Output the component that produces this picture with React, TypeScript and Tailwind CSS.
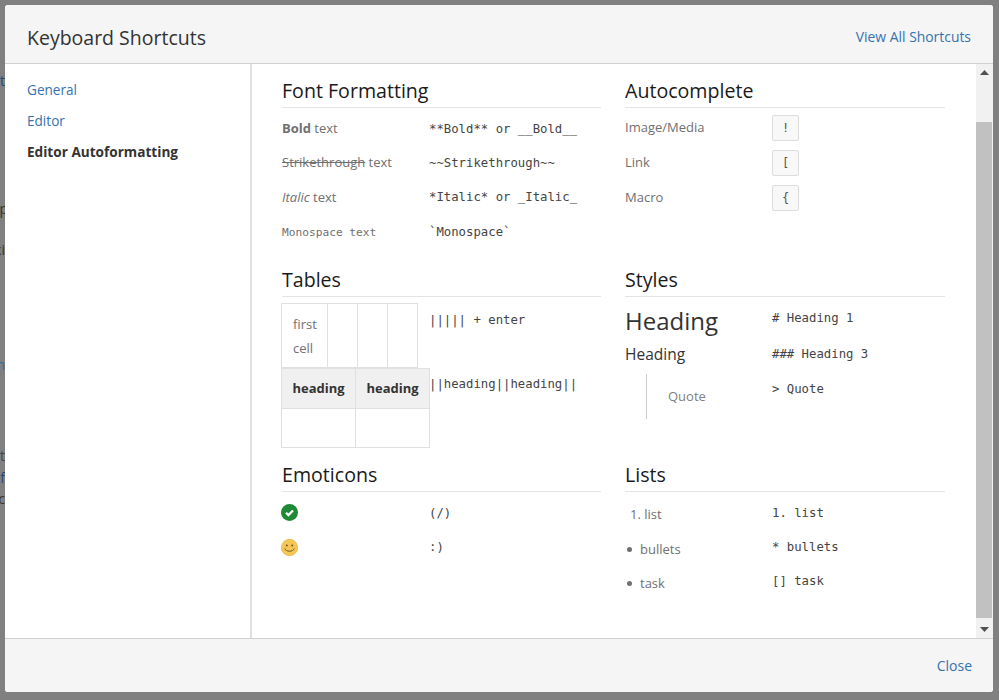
const SANS = 'font-["Open_Sans","Noto_Sans",sans-serif]';

// bits of the page behind the dialog that show in the strip on the left
const BEHIND = [
  { top: 'top-[72px]', color: 'text-[#1f4a7a]', text: 't' },
  { top: 'top-[200px]', color: 'text-[#333]', text: 'up' },
  { top: 'top-[241px]', color: 'text-[#333]', text: 'ki' },
  { top: 'top-[356px]', color: 'text-[#2f6f9f]', text: 'n' },
  { top: 'top-[447px]', color: 'text-[#444]', text: 'ct' },
  { top: 'top-[469px]', color: 'text-[#1f4a7a]', text: 'lf' },
  { top: 'top-[490px]', color: 'text-[#333]', text: 'c' },
];

const Section = ({ title, children }: { title: string; children: React.ReactNode }) => (
  <section>
    <h2 className="h-[30px] border-b border-[#e4e4e4] text-[19.6px] leading-[26px] text-[#1a1a1a]">{title}</h2>
    {children}
  </section>
);

const Mono = ({ children }: { children: React.ReactNode }) => (
  <code className='font-["DejaVu_Sans_Mono",monospace] text-[12.3px] leading-[16px] whitespace-pre text-[#444]'>
    {children}
  </code>
);

const Row = ({ label, code }: { label: React.ReactNode; code: string }) => (
  <div className="flex h-[34.3px] items-center">
    <div className="w-[147px] text-[13px] text-[#707070]">{label}</div>
    <Mono>{code}</Mono>
  </div>
);

const Kbd = ({ children }: { children: string }) => (
  <span className="flex h-[26px] w-[27px] items-center justify-center rounded-[2px] border border-[#ddd] bg-[#f8f8f8] font-['DejaVu_Sans_Mono',monospace] text-[12px] text-[#555]">
    {children}
  </span>
);

const cell = 'border border-[#e0e0e0]';

const App = () => {
  return (
    <div className={`relative h-[700px] w-[999px] overflow-hidden bg-[#808080] p-[5px] pr-[6px] pb-[8px] ${SANS}`}>
      {BEHIND.map((b) => (
        <span key={b.top} className={`absolute -left-[9px] w-[14px] text-right text-[14px] leading-[18px] ${b.top} ${b.color}`}>
          {b.text}
        </span>
      ))}
      <div className="relative flex h-full flex-col overflow-hidden rounded-[3px] bg-white">
        <header className="flex h-[59px] shrink-0 items-center justify-between border-b border-[#d0d0d0] bg-[#f5f5f5] px-[22px] pt-[7px]">
          <h1 className="text-[19.5px] text-[#333]">Keyboard Shortcuts</h1>
          <a className="text-[13.9px] text-[#3572b0]">View All Shortcuts</a>
        </header>

        <div className="flex min-h-0 flex-1">
          <nav className="flex w-[247px] shrink-0 flex-col gap-[10px] border-r-2 border-[#e0e0e0] pt-[15px] pl-[22px] text-[13.6px] leading-[21px]">
            <a className="text-[#3572b0]">General</a>
            <a className="text-[#3572b0]">Editor</a>
            <a className="font-bold text-[#333]">Editor Autoformatting</a>
          </nav>

          <main className="min-w-0 flex-1 pt-[14px] pl-[30px]">
            <div className="grid w-[663px] grid-cols-[319px_320px] grid-rows-[189px_195px_auto] gap-x-[24px]">
              <Section title="Font Formatting">
                <div className="pt-[3.6px]">
                  <Row label={<><b className="font-bold">Bold</b> text</>} code="**Bold** or __Bold__" />
                  <Row label={<><s>Strikethrough</s> text</>} code="~~Strikethrough~~" />
                  <Row label={<><i>Italic</i> text</>} code="*Italic* or _Italic_" />
                  <Row label={<span className='font-["DejaVu_Sans_Mono",monospace] text-[11.2px]'>Monospace text</span>} code="`Monospace`" />
                </div>
              </Section>

              <Section title="Autocomplete">
                <div className="flex flex-col gap-[9px] pt-[7px]">
                  {[
                    ['Image/Media', '!'],
                    ['Link', '['],
                    ['Macro', '{'],
                  ].map(([label, key]) => (
                    <div key={key} className="flex items-center">
                      <div className="w-[147px] text-[13px] text-[#707070]">{label}</div>
                      <Kbd>{key}</Kbd>
                    </div>
                  ))}
                </div>
              </Section>

              <Section title="Tables">
                <div className="flex pt-[6px]">
                  <div className="-ml-[1px] w-[148px] text-[13px] text-[#707070]">
                    <table className="w-[137px] table-fixed border-collapse">
                      <tbody>
                        <tr className="h-[64px]">
                          <td className={`${cell} w-[46px] px-[11px] leading-[24px]`}>first cell</td>
                          <td className={`${cell} w-[30px]`} />
                          <td className={`${cell} w-[30px]`} />
                          <td className={`${cell} w-[30px]`} />
                        </tr>
                      </tbody>
                    </table>
                    <table className="w-[149px] border-collapse">
                      <tbody>
                        <tr className="h-[40px]">
                          <th className={`${cell} w-[74px] bg-[#f0f0f0] text-center font-bold text-[#333]`}>heading</th>
                          <th className={`${cell} w-[74px] bg-[#f0f0f0] text-center font-bold text-[#333]`}>heading</th>
                        </tr>
                        <tr className="h-[39px]">
                          <td className={cell} />
                          <td className={cell} />
                        </tr>
                      </tbody>
                    </table>
                  </div>
                  <div className="flex flex-col gap-[48px] pt-[9px]">
                    <Mono>{'||||| + enter'}</Mono>
                    <Mono>{'||heading||heading||'}</Mono>
                  </div>
                </div>
              </Section>

              <Section title="Styles">
                <div className="pt-[4px]">
                  <div className="flex h-[40px] items-center">
                    <div className="w-[147px] text-[24px] text-[#333]">Heading</div>
                    <div className="-mt-[11px]"><Mono># Heading 1</Mono></div>
                  </div>
                  <div className="flex h-[28px] items-center">
                    <div className="w-[147px] text-[15.5px] text-[#333]">Heading</div>
                    <div className="-mt-[6px]"><Mono>### Heading 3</Mono></div>
                  </div>
                  <div className="flex pt-[5px]">
                    <div className="w-[147px] pl-[21px]">
                      <div className="flex h-[45px] items-center border-l border-[#ccc] pl-[21px] text-[13px] text-[#808080]">Quote</div>
                    </div>
                    <div className="pt-[1px]"><Mono>{'> Quote'}</Mono></div>
                  </div>
                </div>
              </Section>

              <Section title="Emoticons">
                <div className="pt-[3.6px]">
                  <Row
                    label={
                      <svg className="-ml-[1px]" width="17" height="17" viewBox="0 0 17 17">
                        <circle cx="8.5" cy="8.5" r="8.5" fill="#1f8a36" />
                        <path d="M5 8.8l2.4 2.3L12 6.4" fill="none" stroke="#fff" strokeWidth="2.2" />
                      </svg>
                    }
                    code="(/)"
                  />
                  <Row
                    label={
                      <svg className="-ml-[1px]" width="17" height="17" viewBox="0 0 17 17">
                        <circle cx="8.5" cy="8.5" r="8.2" fill="#f5c656" stroke="#e5ad3c" strokeWidth="0.6" />
                        <circle cx="5.8" cy="6.5" r="1" fill="#6b5a2a" />
                        <circle cx="11.2" cy="6.5" r="1" fill="#6b5a2a" />
                        <path d="M3.8 9.5c1 3.6 8.4 3.6 9.4 0" fill="none" stroke="#6b5a2a" strokeWidth="1" />
                      </svg>
                    }
                    code=":)"
                  />
                </div>
              </Section>

              <Section title="Lists">
                <div className="pt-[3.6px]">
                  <Row label={<span className="block pt-[5px] pl-[5px]">1. list</span>} code="1. list" />
                  <Row label={<span className="flex items-center gap-[8px] pt-[5px] pl-[2px]"><span className="size-[5px] rounded-full bg-[#707070]" />bullets</span>} code="* bullets" />
                  <Row label={<span className="flex items-center gap-[8px] pt-[5px] pl-[2px]"><span className="size-[5px] rounded-full bg-[#707070]" />task</span>} code="[] task" />
                </div>
              </Section>
            </div>
          </main>

          <div className="flex w-[17px] shrink-0 flex-col bg-[#f1f1f1]">
            <div className="flex h-[17px] items-center justify-center">
              <svg width="9" height="5" viewBox="0 0 9 5"><path d="M4.5 0L9 5H0z" fill="#505050" /></svg>
            </div>
            <div className="mt-[41px] h-[496px] w-[16px] bg-[#c1c1c1]" />
            <div className="mt-auto flex h-[17px] items-center justify-center">
              <svg width="9" height="5" viewBox="0 0 9 5"><path d="M4.5 5L9 0H0z" fill="#505050" /></svg>
            </div>
          </div>
        </div>

        <footer className="flex h-[54px] shrink-0 items-center justify-end border-t border-[#d0d0d0] bg-[#f5f5f5] pr-[21px]">
          <a className="text-[14px] text-[#3572b0]">Close</a>
        </footer>
      </div>
    </div>
  );
};

export default App;
